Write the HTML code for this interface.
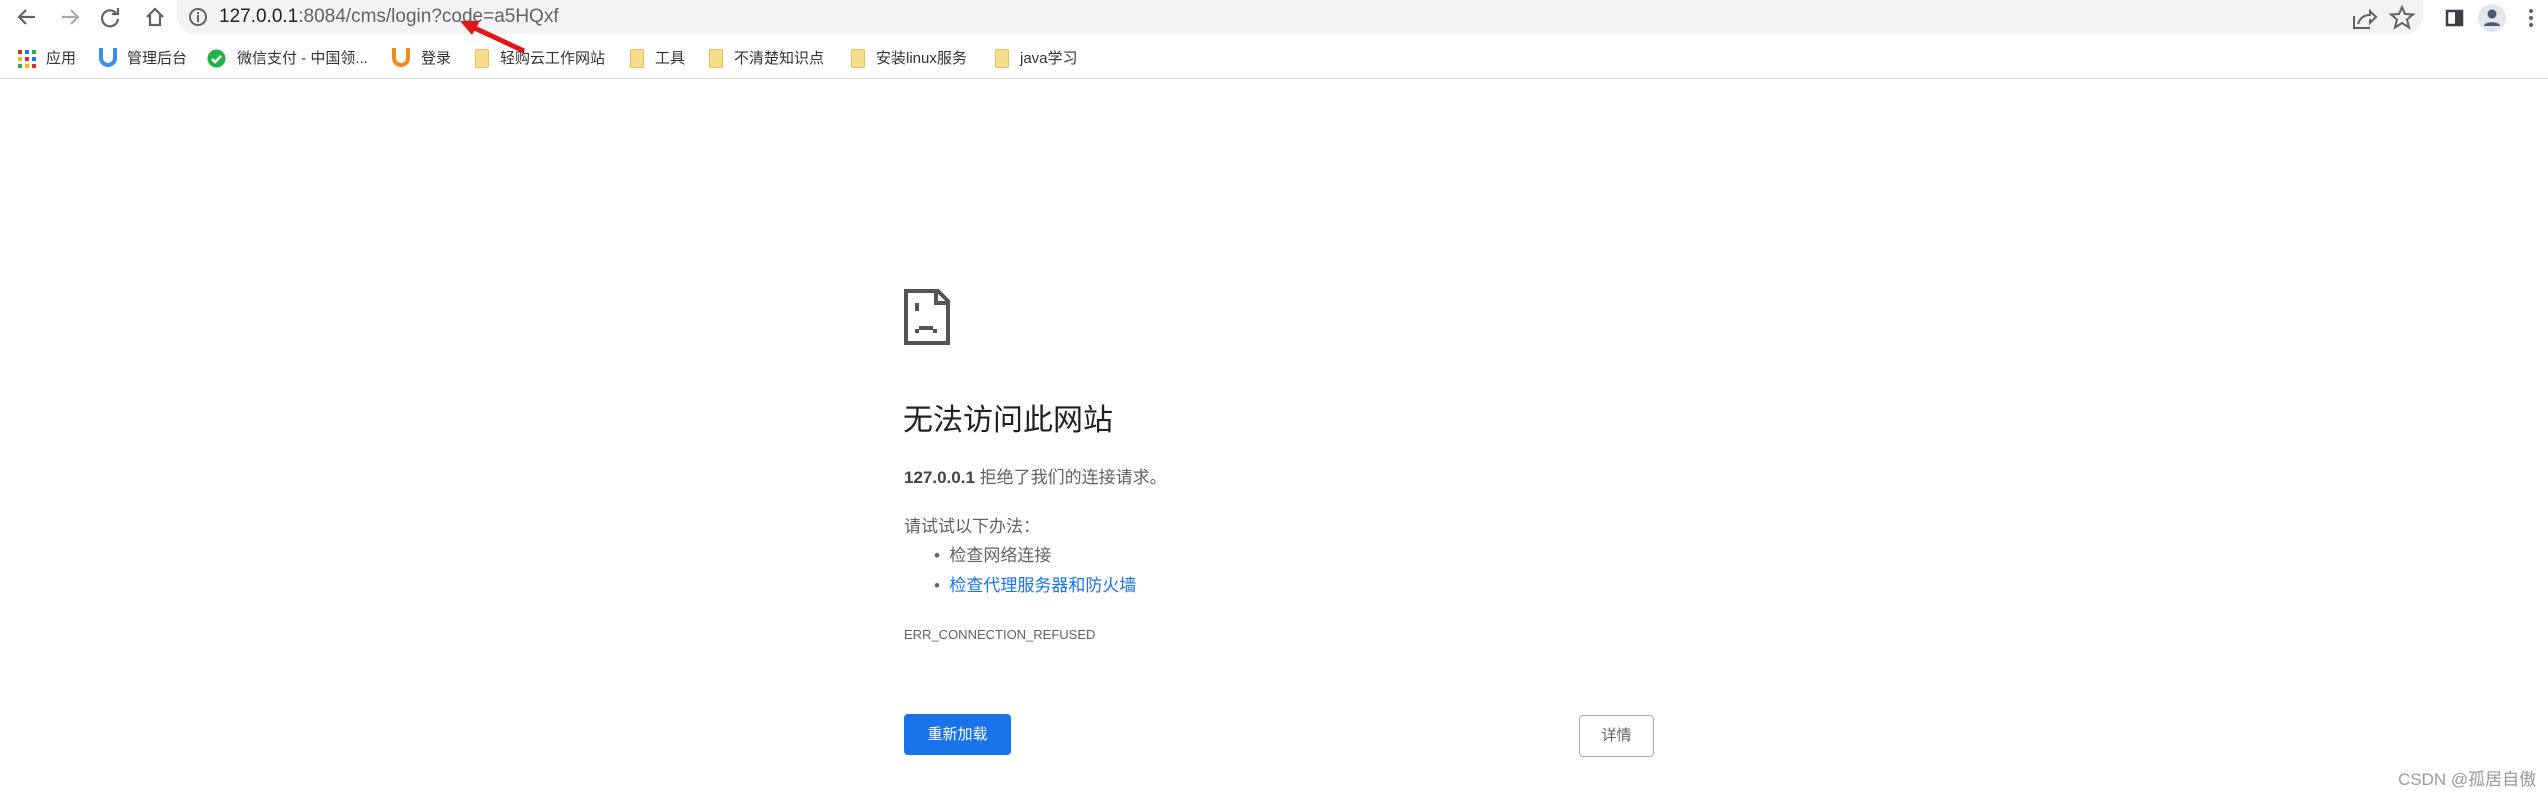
<!DOCTYPE html>
<html><head><meta charset="utf-8"><style>
*{margin:0;padding:0;box-sizing:border-box}
body{width:2548px;height:801px;background:#fff;position:relative;overflow:hidden;font-family:"Liberation Sans","Noto Sans CJK SC",sans-serif}
.a{position:absolute}
.bm{position:absolute;top:47px;font-size:15px;color:#333;white-space:nowrap;line-height:24px}
.fold{position:absolute;top:49px;width:14px;height:19px;background:#f7dd8a;border:1px solid #e3c15d;border-radius:2px}
</style></head><body>
<!-- toolbar -->
<div class="a" style="left:177px;top:0;width:2246px;height:34px;background:#f1f3f4;border-radius:0 0 17px 17px"></div>
<svg class="a" style="left:15px;top:4px" width="160" height="26" viewBox="0 0 160 26" fill="none" stroke="#5f6368" stroke-width="2.2">
<path d="M20 13H4M11 6l-7 7 7 7"/>
<path d="M47 13h16M56 6l7 7-7 7" stroke="#aaa"/>
<path d="M101 9a8 8 0 1 0 2 6M103 4v6h-6"/>
<path d="M132 13l8-8 8 8M135 11v10h10V11"/>
</svg>
<svg class="a" style="left:188px;top:7px" width="20" height="20"><circle cx="10" cy="10" r="8" fill="none" stroke="#5f6368" stroke-width="2"/><rect x="9" y="8" width="2" height="7" fill="#5f6368"/><rect x="9" y="5" width="2" height="2" fill="#5f6368"/></svg>
<div class="a" style="left:219px;top:3px;font-size:19px;color:#202124;line-height:28px">127.0.0.1<span style="color:#5f6368">:8084/cms/login?code=a5HQxf</span></div>
<svg class="a" style="left:450px;top:15px" width="80" height="40"><path d="M74 36L18 10" stroke="#e0161c" stroke-width="5"/><path d="M10 6l20 0-8 14z" fill="#e0161c"/></svg>
<svg class="a" style="left:2350px;top:4px" width="200" height="28" fill="none" stroke="#5f6368" stroke-width="2">
<path d="M4 12v12h16M8 20c2-6 6-9 12-9V7l6 6-6 6v-4"/>
<path d="M52 3l3 7 8 .5-6 5 2 8-7-4.5-7 4.5 2-8-6-5 8-.5z"/>
<rect x="97" y="7" width="15" height="14" fill="#fff" stroke="#3c4043" stroke-width="2.5"/><rect x="105" y="7" width="7" height="14" fill="#3c4043" stroke="none"/>
<circle cx="142" cy="14" r="14" fill="#e3e6ea" stroke="none"/><circle cx="142" cy="10" r="4.5" fill="#4a5a70" stroke="none"/><path d="M134 22c0-5 16-5 16 0z" fill="#4a5a70" stroke="none"/>
<circle cx="181" cy="7" r="2" fill="#5f6368" stroke="none"/><circle cx="181" cy="14" r="2" fill="#5f6368" stroke="none"/><circle cx="181" cy="21" r="2" fill="#5f6368" stroke="none"/>
</svg>
<!-- bookmarks -->
<svg class="a" style="left:18px;top:50px" width="18" height="18"><g fill="#d93025"><rect x="0" y="0" width="4" height="4"/><rect x="7" y="0" width="4" height="4" fill="#1a73e8"/><rect x="14" y="0" width="4" height="4" fill="#34a853"/><rect x="0" y="7" width="4" height="4" fill="#fbbc04"/><rect x="7" y="7" width="4" height="4"/><rect x="14" y="7" width="4" height="4" fill="#1a73e8"/><rect x="0" y="14" width="4" height="4" fill="#34a853"/><rect x="7" y="14" width="4" height="4" fill="#fbbc04"/><rect x="14" y="14" width="4" height="4"/></g></svg>
<div class="bm" style="left:46px">应用</div>
<svg class="a" style="left:98px;top:46px" width="20" height="24"><path d="M3 2v10a7 7 0 0 0 14 0V2" fill="none" stroke="#3b8ef0" stroke-width="4"/></svg>
<div class="bm" style="left:127px">管理后台</div>
<svg class="a" style="left:207px;top:49px" width="19" height="19"><circle cx="9.5" cy="9.5" r="9" fill="#22b04b"/><path d="M5 10l3 3 6-6" stroke="#fff" stroke-width="2.5" fill="none"/></svg>
<div class="bm" style="left:237px">微信支付 - 中国领...</div>
<svg class="a" style="left:391px;top:46px" width="20" height="24"><path d="M3 2v10a7 7 0 0 0 14 0V2" fill="none" stroke="#f08a1c" stroke-width="4"/></svg>
<div class="bm" style="left:421px">登录</div>
<div class="fold" style="left:475px"></div><div class="bm" style="left:500px">轻购云工作网站</div>
<div class="fold" style="left:630px"></div><div class="bm" style="left:655px">工具</div>
<div class="fold" style="left:709px"></div><div class="bm" style="left:734px">不清楚知识点</div>
<div class="fold" style="left:851px"></div><div class="bm" style="left:876px">安装linux服务</div>
<div class="fold" style="left:995px"></div><div class="bm" style="left:1020px">java学习</div>
<div class="a" style="left:0;top:78px;width:2548px;height:1px;background:#dadce0"></div>
<!-- content -->
<svg class="a" style="left:904px;top:289px" width="46" height="56" viewBox="0 0 46 56" shape-rendering="crispEdges"><path d="M2 2h32l10 10v42H2z" fill="none" stroke="#555" stroke-width="4"/><path d="M32 2v12h12" fill="none" stroke="#555" stroke-width="4"/><rect x="11" y="14" width="4" height="8" fill="#555"/><rect x="11" y="40" width="4" height="4" fill="#555"/><rect x="15" y="37" width="14" height="4" fill="#555"/><rect x="29" y="40" width="4" height="4" fill="#555"/></svg>
<div class="a" style="left:903px;top:400px;font-size:30px;color:#202124;line-height:42px">无法访问此网站</div>
<div class="a" style="left:904px;top:466px;font-size:17px;color:#5f6368;line-height:24px"><b style="color:#444">127.0.0.1</b> 拒绝了我们的连接请求。</div>
<div class="a" style="left:904px;top:515px;font-size:17px;color:#5f6368;line-height:24px">请试试以下办法：</div>
<div class="a" style="left:934px;top:544px;font-size:17px;color:#5f6368;line-height:24px">•&nbsp;&nbsp;检查网络连接</div>
<div class="a" style="left:934px;top:574px;font-size:17px;color:#5f6368;line-height:24px">•&nbsp;&nbsp;<span style="color:#1a73e8">检查代理服务器和防火墙</span></div>
<div class="a" style="left:904px;top:626px;font-size:13px;color:#5f6368;line-height:18px">ERR_CONNECTION_REFUSED</div>
<div class="a" style="left:904px;top:714px;width:107px;height:41px;background:#1a73e8;border-radius:4px;color:#fff;font-size:15px;line-height:41px;text-align:center">重新加载</div>
<div class="a" style="left:1579px;top:715px;width:75px;height:42px;border:1px solid #aaa;border-radius:4px;color:#5f6368;font-size:15px;line-height:40px;text-align:center">详情</div>
<div class="a" style="left:2398px;top:768px;font-size:17px;color:#999;line-height:24px">CSDN @孤居自傲</div>
</body></html>
